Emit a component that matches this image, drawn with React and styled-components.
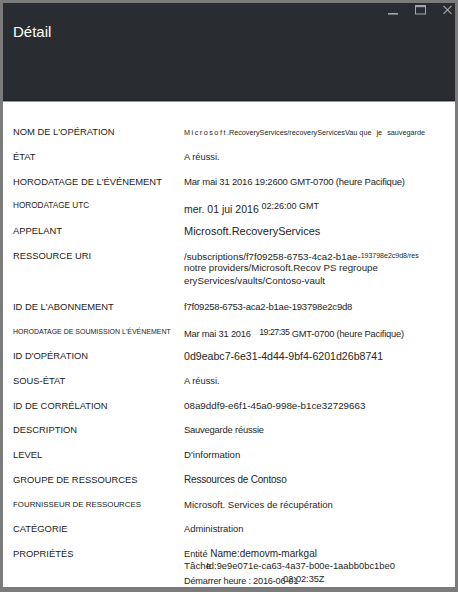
import styled, { createGlobalStyle } from 'styled-components';

const GlobalStyle = createGlobalStyle`
  html, body {
    margin: 0;
    padding: 0;
    background: #ffffff;
  }
  body {
    font-family: "Liberation Sans", Arial, sans-serif;
  }
`;

const Window = styled.div`
  width: 458px;
  height: 592px;
  box-sizing: border-box;
  border: 3px solid #7b7b7b;
  border-bottom-width: 5px;
  display: flex;
  flex-direction: column;
  background: #ffffff;
  overflow: hidden;
`;

const TitleBar = styled.header`
  height: 98px;
  flex-shrink: 0;
  box-sizing: border-box;
  background: #292d32;
  border-bottom: 1px solid #1c1f23;
  display: flex;
  flex-direction: column;
  padding: 2px 3px 0 10px;
`;

const Controls = styled.div`
  display: flex;
  justify-content: flex-end;
  align-items: flex-start;
  gap: 17px;
  color: #a3a7ab;
`;

const ControlIcon = styled.svg`
  display: block;
`;

const Title = styled.h1`
  margin: 8px 0 0;
  font-family: "Liberation Sans", Arial, sans-serif;
  font-size: 15px;
  line-height: 18px;
  font-weight: 400;
  color: #ffffff;
`;

const Content = styled.main`
  flex: 1;
  border-top: 1px solid #9a9a9a;
  padding: 18.2px 0 0 10px;
  display: flex;
  flex-direction: column;
`;

const Row = styled.div`
  display: grid;
  grid-template-columns: 171px 1fr;
  align-items: start;
  padding: 6.1px 0;
`;

const Label = styled.div`
  font-size: ${(p) => p.$size || 9.4}px;
  line-height: 12.5px;
  height: 12.5px;
  color: #1b1b1b;
  white-space: nowrap;
`;

const Value = styled.div`
  font-size: ${(p) => p.$size || 10}px;
  color: #262626;
  white-space: nowrap;
  letter-spacing: ${(p) => (p.$tight ? '-0.2px' : '0')};
  padding-bottom: ${(p) => p.$after || 0}px;
`;

const Line = styled.div`
  height: 12.5px;
  line-height: 12.5px;
`;

const Small = styled.span`
  font-size: ${(p) => p.$size}px;
  letter-spacing: ${(p) => p.$track || 0}px;
`;

const Spaced = styled.span`
  letter-spacing: ${(p) => p.$gap}px;
`;

const Wide = styled.span`
  word-spacing: 3px;
`;

const Raised = styled.span`
  font-size: ${(p) => p.$size}px;
  vertical-align: ${(p) => p.$lift}px;
  padding-left: ${(p) => p.$pad || 0}px;
  letter-spacing: ${(p) => p.$track || 0}px;
`;

const Overlap = styled.span`
  margin-left: ${(p) => p.$shift}px;
  vertical-align: ${(p) => p.$lift || 0}px;
`;

function buildRows() {
  return [
    {
      label: "NOM DE L'OPÉRATION",
      value: (
        <Line>
          <Small $size={7.25}>
            <Spaced $gap={1.5}>Microsoft</Spaced>.RecoveryServices/recoveryServicesVau{' '}
            <Wide>que je sauvegarde</Wide>
          </Small>
        </Line>
      ),
    },
    { label: 'ÉTAT', value: <Line>A réussi.</Line>, valueSize: 9.3 },
    {
      label: "HORODATAGE DE L'ÉVÉNEMENT",
      value: <Line>Mar mai 31 2016 19:2600 GMT-0700 (heure Pacifique)</Line>,
      valueSize: 9.5,
      tight: true,
    },
    {
      label: 'HORODATAGE UTC',
      labelSize: 8.2,
      value: (
        <Line>
          <Small $size={10.5}>mer. 01 jui 2016</Small>{' '}
          <Raised $size={9} $lift={4}>02:26:00 GMT</Raised>
        </Line>
      ),
    },
    { label: 'APPELANT', value: <Line>Microsoft.RecoveryServices</Line>, valueSize: 11 },
    {
      label: 'RESSOURCE URI',
      value: (
        <>
          <Line>
            /subscriptions/f7f09258-6753-4ca2-b1ae-
            <Raised $size={7} $lift={2}>193798e2c9d8/res</Raised>
          </Line>
          <Line>notre providers/Microsoft.Recov PS regroupe</Line>
          <Line>eryServices/vaults/Contoso-vault</Line>
        </>
      ),
      valueSize: 9.7,
      after: 1.6,
    },
    {
      label: "ID DE L'ABONNEMENT",
      value: <Line>f7f09258-6753-aca2-b1ae-193798e2c9d8</Line>,
      valueSize: 9.5,
      tight: true,
    },
    {
      label: "HORODATAGE DE SOUMISSION L'ÉVÉNEMENT",
      labelSize: 7,
      value: (
        <Line>
          Mar mai 31 2016{' '}
          <Raised $size={8.8} $lift={1.5} $pad={6} $track={-0.5}>
            19:27:35
          </Raised>{' '}
          GMT-0700 (heure Pacifique)
        </Line>
      ),
      valueSize: 9.3,
      tight: true,
    },
    {
      label: "ID D'OPÉRATION",
      value: <Line>0d9eabc7-6e31-4d44-9bf4-6201d26b8741</Line>,
      valueSize: 10.6,
    },
    { label: 'SOUS-ÉTAT', value: <Line>A réussi.</Line>, valueSize: 9.3 },
    {
      label: 'ID DE CORRÉLATION',
      value: <Line>08a9ddf9-e6f1-45a0-998e-b1ce32729663</Line>,
      valueSize: 9.8,
    },
    {
      label: 'DESCRIPTION',
      value: <Line>Sauvegarde réussie</Line>,
      valueSize: 9.4,
      tight: true,
    },
    { label: 'LEVEL', value: <Line>D'information</Line>, valueSize: 9.6 },
    {
      label: 'GROUPE DE RESSOURCES',
      value: <Line>Ressources de Contoso</Line>,
      valueSize: 10,
      tight: true,
    },
    {
      label: 'FOURNISSEUR DE RESSOURCES',
      labelSize: 7.9,
      value: <Line>Microsoft. Services de récupération</Line>,
      valueSize: 9.5,
    },
    { label: 'CATÉGORIE', value: <Line>Administration</Line>, valueSize: 9.4 },
    {
      label: 'PROPRIÉTÉS',
      value: (
        <>
          <Line>
            <Small $size={9.2}>Entité</Small> <Small $size={10}>Name:demovm-markgal</Small>
          </Line>
          <Line>
            Tâche
            <Overlap $shift={-5}>
              <Small $size={9.4}>Id:9e9e071e-ca63-4a37-b00e-1aabb0bc1be0</Small>
            </Overlap>
          </Line>
          <Line>
            <Small $size={9.2} $track={-0.2}>
              Démarrer heure : 2016-06-01
            </Small>
            <Overlap $shift={-15} $lift={1.5}>
              <Small $size={9.2}>02:02:35Z</Small>
            </Overlap>
          </Line>
        </>
      ),
      valueSize: 9.8,
    },
  ];
}

export default function App() {
  const rows = buildRows();

  return (
    <>
      <GlobalStyle />
      <Window>
        <TitleBar>
          <Controls>
            <ControlIcon width="10" height="10" viewBox="0 0 10 10">
              <rect x="0" y="8" width="10" height="1.6" fill="currentColor" />
            </ControlIcon>
            <ControlIcon width="11" height="10" viewBox="0 0 11 10">
              <rect x="0.5" y="0.5" width="10" height="8.5" fill="none" stroke="currentColor" />
              <rect x="0" y="0" width="11" height="2.2" fill="currentColor" />
            </ControlIcon>
            <ControlIcon width="9" height="10" viewBox="0 0 9 10">
              <path d="M0.5 0.8 L8.5 8.8 M8.5 0.8 L0.5 8.8" stroke="currentColor" strokeWidth="1.2" />
            </ControlIcon>
          </Controls>
          <Title>Détail</Title>
        </TitleBar>

        <Content>
          {rows.map((row) => (
            <Row key={row.label}>
              <Label $size={row.labelSize}>{row.label}</Label>
              <Value $size={row.valueSize} $tight={row.tight} $after={row.after}>
                {row.value}
              </Value>
            </Row>
          ))}
        </Content>
      </Window>
    </>
  );
}
